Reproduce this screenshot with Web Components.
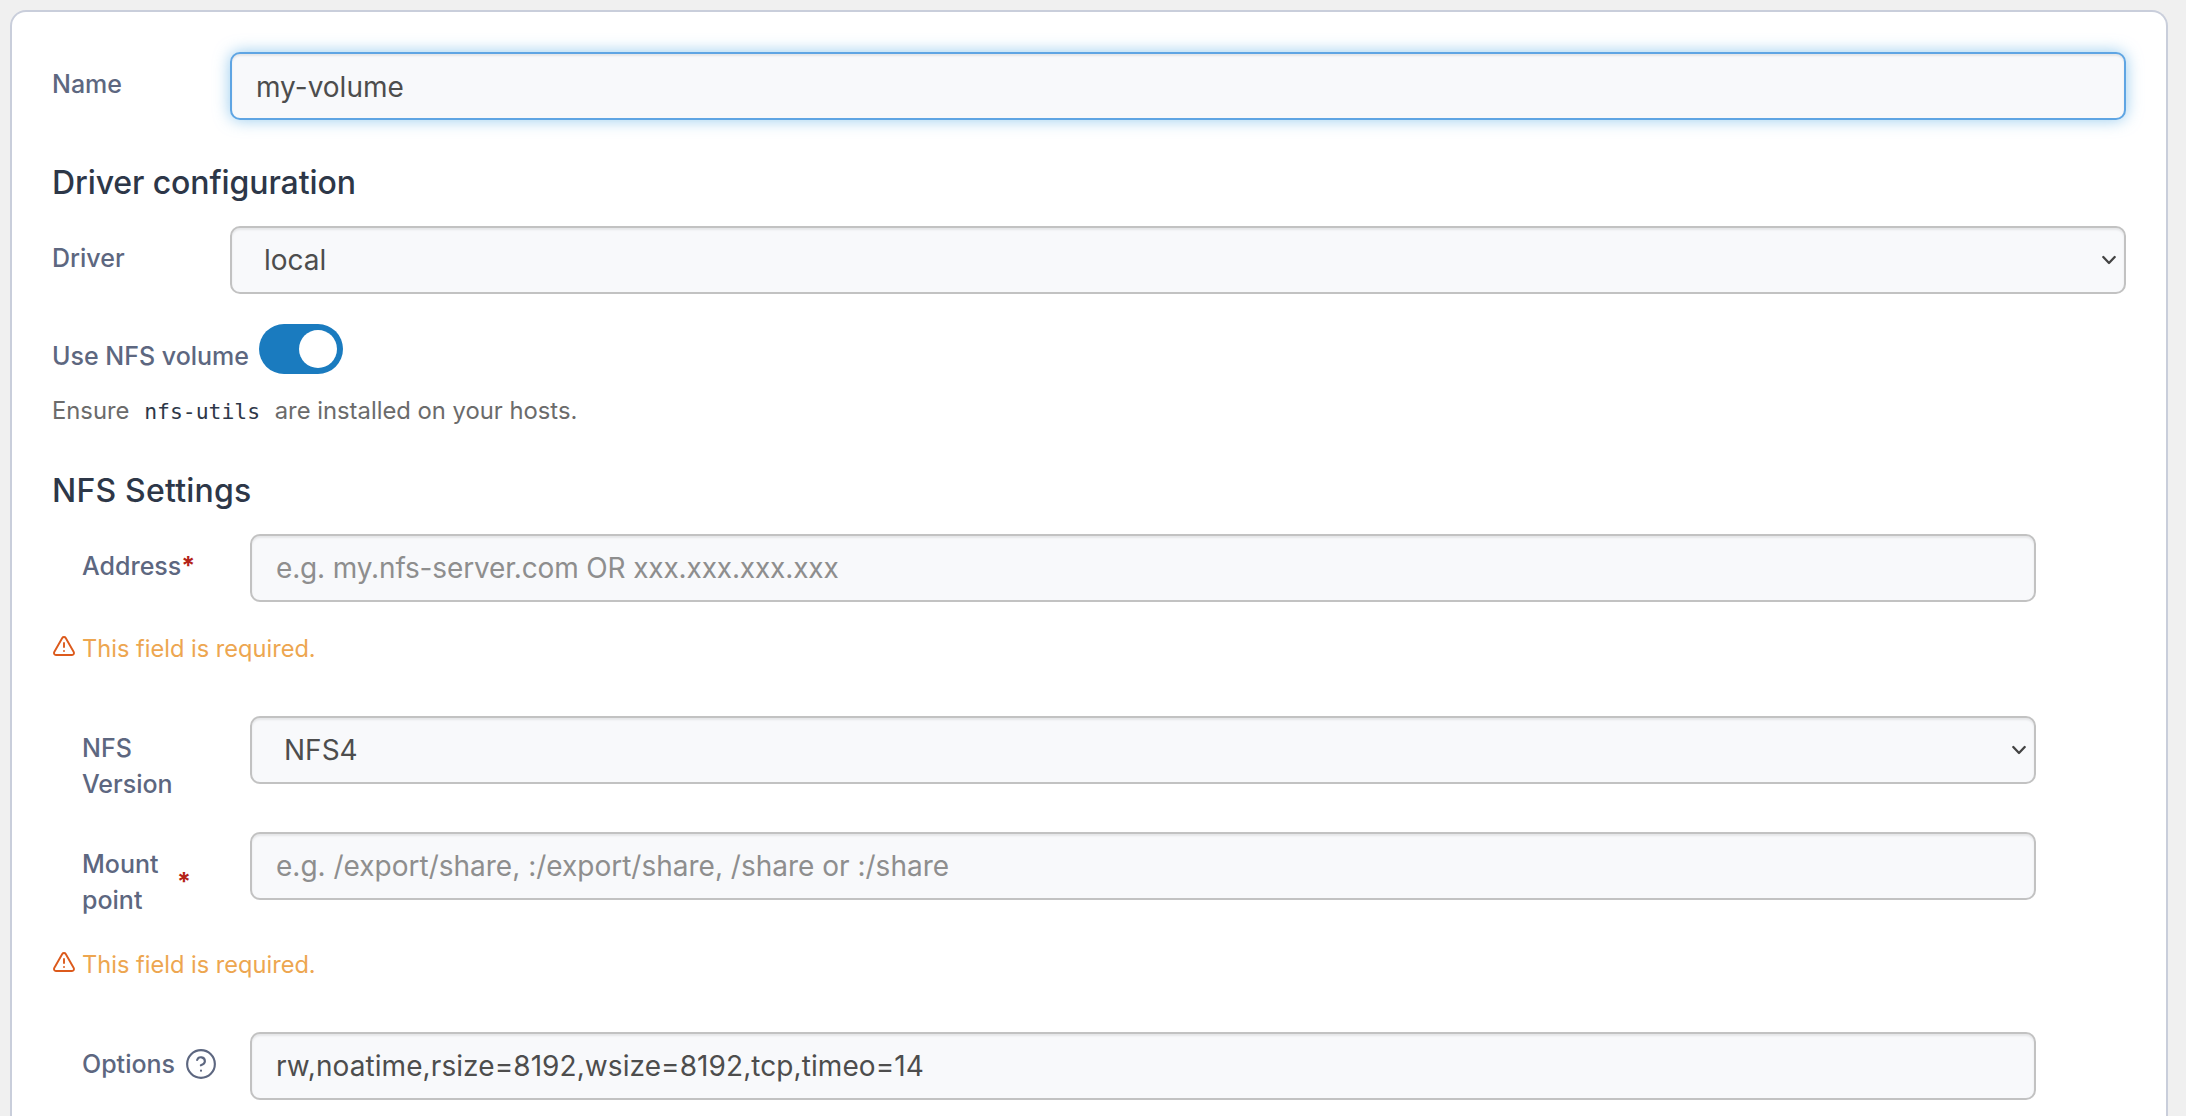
<!DOCTYPE html>
<html lang="en">
<head>
<meta charset="utf-8">
<title>Create volume</title>
<style>
html,body{margin:0;height:100%}
body{background:#f0f0f0;overflow:hidden;font-family:Inter,"Liberation Sans",sans-serif}
</style>
</head>
<body>
<volume-form></volume-form>
<script>
const define = (name, css, html, setup) => customElements.define(name, class extends HTMLElement {
  constructor() {
    super();
    const t = document.createElement('template');
    t.innerHTML = `<style>*{box-sizing:border-box}${css}</style>${html}`;
    this.attachShadow({mode: 'open'}).append(t.content.cloneNode(true));
  }
  connectedCallback() { if (setup) setup(this, this.shadowRoot); }
});

define('form-card',
  `:host{display:block;box-sizing:border-box;margin:0 18px 0 10px;height:1106px;border:2px solid #c9cedb;border-bottom:0;border-radius:16px 16px 0 0;background:#fff;padding:40px 40px 0 40px}`,
  `<slot></slot>`);

define('section-title',
  `:host{display:block;font-size:32px;line-height:40px;font-weight:530;color:#2d3748}`,
  `<slot></slot>`);

// Label column on the left, control filling the rest of the row.
define('form-row',
  `:host{display:flex;align-items:flex-start}
   .label{flex:none;width:178px;padding-top:14px;display:flex;align-items:center;font-size:25px;line-height:36px;font-weight:550;color:#5d6780}
   :host([inset]) .label{width:198px;padding-left:30px}
   :host([inset]) .control{margin-right:90px}
   .control{flex:1;min-width:0}`,
  `<div class="label"><slot name="label"></slot></div><div class="control"><slot></slot></div>`);

const box = `:host{display:block}
  .box{height:68px;border:2px solid #c2c2c2;border-radius:10px;background:#f8f9fb;box-shadow:inset 0 2px 2px rgba(0,0,0,.075);display:flex;align-items:center;font-size:28px;line-height:40px;color:#4d4d4d;white-space:pre}`;

define('text-field',
  `${box}.box{padding:0 24px}
   :host([focused]) .box{padding-top:2px;border-color:#5fa5e3;box-shadow:inset 0 2px 2px rgba(0,0,0,.075),0 0 16px rgba(82,168,226,.6)}
   :host([placeholder]) .box{color:#8e8e8e}`,
  `<div class="box"><span></span></div>`,
  (el, root) => { root.querySelector('span').textContent = el.getAttribute('placeholder') || el.getAttribute('value'); });

define('select-field',
  `${box}.box{padding:0 8px 0 32px;justify-content:space-between}svg{display:block}`,
  `<div class="box"><slot></slot><svg width="14" height="10" viewBox="0 0 14 10" fill="none" stroke="#444" stroke-width="2.3" stroke-linecap="round" stroke-linejoin="round"><path d="M1.3 2l5.7 6 5.7-6"/></svg></div>`);

define('toggle-switch',
  `:host{display:flex;width:84px;height:50px;border-radius:25px;background:#1a7bbf;padding:6px;justify-content:flex-end;box-sizing:border-box}
   i{width:38px;height:38px;border-radius:50%;background:#fff}`,
  `<i></i>`);

define('field-warning',
  `:host{display:flex;align-items:flex-start;font-size:23.6px;font-weight:430;line-height:34px;color:#eda650}
   svg{flex:none;display:block;margin:2px 6px 0 0}`,
  `<svg width="24" height="24" viewBox="0 0 24 24" fill="none" stroke="#dc5a1c" stroke-width="1.9" stroke-linecap="round" stroke-linejoin="round"><path d="m21.73 18-8-14a2 2 0 0 0-3.48 0l-8 14A2 2 0 0 0 4 21h16a2 2 0 0 0 1.73-3Z"/><path d="M12 9v4"/><path d="M12 17h.01"/></svg><span><slot></slot></span>`);

define('required-mark',
  `:host{display:block;color:#b42318;font-weight:700}`, `*`);

define('help-icon',
  `:host{display:block}svg{display:block}`,
  `<svg width="32" height="32" viewBox="0 0 24 24" fill="none" stroke="#5d6780" stroke-width="1.6" stroke-linecap="round" stroke-linejoin="round"><circle cx="12" cy="12" r="10.4"/><path d="M9.09 9a3 3 0 0 1 5.83 1c0 2-3 3-3 3"/><path d="M12 17h.01"/></svg>`);

define('volume-form',
  `:host{display:block;box-sizing:border-box;padding-top:10px;height:1116px;overflow:hidden}
   .toggle{display:flex;align-items:flex-start;margin-top:30px;font-size:25px;line-height:36px;font-weight:550;color:#5d6780}
   .toggle span{padding-top:14px;width:207px;white-space:nowrap}
   .hint{display:flex;align-items:baseline;height:34px;margin-top:20px;font-size:23.8px;line-height:34px;color:#6b6b6b;white-space:pre}
   code{font-family:"DejaVu Sans Mono",monospace;font-size:21.4px;color:#2d3748;padding:0 8px}`,
  `<form-card>
    <form-row><span slot="label">Name</span><text-field focused value="my-volume"></text-field></form-row>
    <section-title style="margin-top:43px;letter-spacing:-.1px">Driver configuration</section-title>
    <form-row style="margin-top:23px"><span slot="label">Driver</span><select-field>local</select-field></form-row>
    <div class="toggle"><span>Use NFS volume</span><toggle-switch></toggle-switch></div>
    <div class="hint"><span>Ensure </span><code>nfs-utils</code><span> are installed on your hosts.</span></div>
    <section-title style="margin-top:43px;letter-spacing:.2px">NFS Settings</section-title>
    <form-row inset style="margin-top:23px"><span slot="label">Address</span><required-mark slot="label"></required-mark><text-field style="letter-spacing:-.15px" placeholder="e.g. my.nfs-server.com OR xxx.xxx.xxx.xxx"></text-field></form-row>
    <field-warning style="margin-top:30px">This field is required.</field-warning>
    <form-row inset style="margin-top:50px"><span slot="label">NFS<br>Version</span><select-field>NFS4</select-field></form-row>
    <form-row inset style="margin-top:30px"><span slot="label" style="width:95px">Mount<br>point</span><required-mark slot="label"></required-mark><text-field placeholder="e.g. /export/share, :/export/share, /share or :/share"></text-field></form-row>
    <field-warning style="margin-top:30px">This field is required.</field-warning>
    <form-row inset style="margin-top:50px"><span slot="label">Options</span><help-icon slot="label" style="margin-left:10px"></help-icon><text-field style="letter-spacing:.08px" value="rw,noatime,rsize=8192,wsize=8192,tcp,timeo=14"></text-field></form-row>
  </form-card>`);
</script>
</body>
</html>
